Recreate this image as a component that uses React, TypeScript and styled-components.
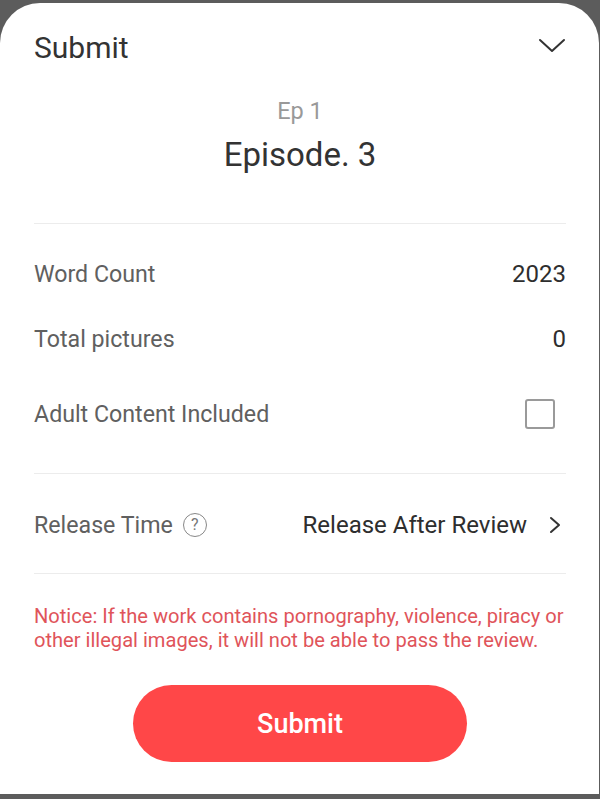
import React from "react";
import styled, { createGlobalStyle } from "styled-components";

const Global = createGlobalStyle`
  html, body { margin: 0; padding: 0; background: #5c5c5c; }
  body { font-family: Roboto, "Noto Sans", Arial, sans-serif; }
  * { box-sizing: border-box; }
`;

const Page = styled.div`
  width: 600px;
  height: 799px;
  background: #5c5c5c;
  padding-top: 3px;
  display: flex;
  flex-direction: column;
`;

const Sheet = styled.div`
  width: 599px;
  height: 791px;
  background: #fff;
  border-radius: 40px 40px 0 0;
  padding: 0 33px 0 34px;
  display: flex;
  flex-direction: column;
`;

const Header = styled.div`
  height: 89px;
  display: flex;
  align-items: center;
  justify-content: space-between;
`;

const HeaderTitle = styled.div`
  font-size: 30px;
  color: #333;
`;

const Chevron = styled.svg`
  width: 30px;
  height: 30px;
  margin-right: -1px;
  margin-top: -5px;
`;

const EpisodeBlock = styled.div`
  display: flex;
  flex-direction: column;
  align-items: center;
  padding-top: 4px;
  height: 132px;
  border-bottom: 1px solid #ececec;
`;

const EpSub = styled.div`
  font-size: 23.5px;
  color: #999;
  line-height: 30px;
`;

const EpTitle = styled.div`
  font-size: 33px;
  color: #333;
  line-height: 44px;
  margin-top: 7px;
`;

const InfoGroup = styled.div`
  display: flex;
  flex-direction: column;
  padding-top: 19px;
  height: 250px;
  border-bottom: 1px solid #ececec;
`;

const Row = styled.div<{ $h: number }>`
  height: ${(p) => p.$h}px;
  display: flex;
  align-items: center;
  justify-content: space-between;
`;

const Label = styled.div`
  font-size: 23.2px;
  color: #606060;
  display: flex;
  align-items: center;
  gap: 10px;
`;

const Value = styled.div`
  font-size: 24px;
  color: #2e2e2e;
  display: flex;
  align-items: center;
  gap: 22px;
`;

const Checkbox = styled.div`
  width: 30px;
  height: 30px;
  border: 2.5px solid #9a9a9a;
  border-radius: 3px;
  margin-right: 11px;
`;

const ReleaseRow = styled.div`
  height: 100px;
  padding-top: 2px;
  display: flex;
  align-items: center;
  justify-content: space-between;
  border-bottom: 1px solid #ececec;
`;

const Help = styled.span`
  width: 24px;
  height: 24px;
  border: 1px solid #888;
  border-radius: 50%;
  font-size: 16px;
  color: #777;
  display: inline-flex;
  align-items: center;
  justify-content: center;
`;

const ArrowIcon = styled.svg`
  margin-right: 5px;
`;

const Notice = styled.p`
  margin: 30px 0 0;
  font-size: 20.1px;
  line-height: 24px;
  color: #e0545a;
`;

const ButtonWrap = styled.div`
  display: flex;
  justify-content: center;
  margin-top: 33px;
`;

const SubmitButton = styled.button`
  width: 334px;
  height: 77px;
  border: none;
  border-radius: 39px;
  background: #ff4748;
  color: #fff;
  font-family: Roboto, sans-serif;
  font-size: 27px;
  font-weight: 500;
`;

export default function App() {
  return (
    <>
      <Global />
      <Page>
        <Sheet>
          <Header>
            <HeaderTitle>Submit</HeaderTitle>
            <Chevron viewBox="0 0 30 30" fill="none">
              <path d="M3 10 L15 21 L27 10" stroke="#333" strokeWidth="2" strokeLinecap="round" strokeLinejoin="round" />
            </Chevron>
          </Header>
          <EpisodeBlock>
            <EpSub>Ep 1</EpSub>
            <EpTitle>Episode. 3</EpTitle>
          </EpisodeBlock>
          <InfoGroup>
            <Row $h={62}>
              <Label>Word Count</Label>
              <Value>2023</Value>
            </Row>
            <Row $h={68}>
              <Label>Total pictures</Label>
              <Value>0</Value>
            </Row>
            <Row $h={82}>
              <Label>Adult Content Included</Label>
              <Checkbox />
            </Row>
          </InfoGroup>
          <ReleaseRow>
            <Label>
              Release Time <Help>?</Help>
            </Label>
            <Value>
              Release After Review
              <ArrowIcon width="12" height="20" viewBox="0 0 12 20" fill="none">
                <path d="M2 3 L10 10 L2 17" stroke="#333" strokeWidth="2" strokeLinecap="round" strokeLinejoin="round" />
              </ArrowIcon>
            </Value>
          </ReleaseRow>
          <Notice>
            Notice: If the work contains pornography, violence, piracy or other illegal images, it will not be able to pass the review.
          </Notice>
          <ButtonWrap>
            <SubmitButton>Submit</SubmitButton>
          </ButtonWrap>
        </Sheet>
      </Page>
    </>
  );
}
